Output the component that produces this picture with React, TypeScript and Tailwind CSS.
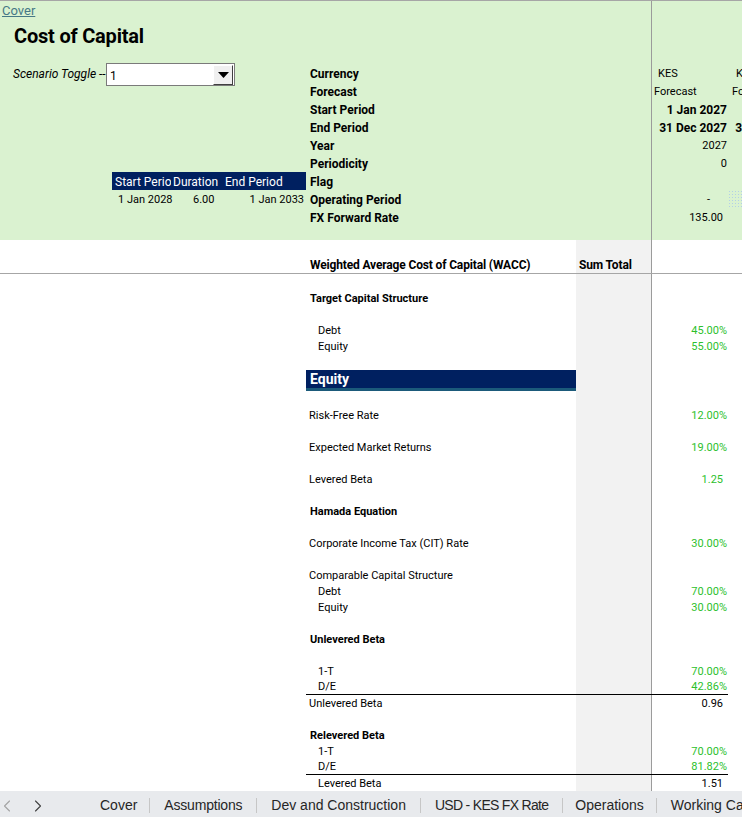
import type { ReactNode } from 'react';
import { ChevronLeft, ChevronRight } from 'lucide-react';

// spreadsheet columns: A 0-306 · B 306-576 · C 576-651 · D 651-728 · E 728+
function SheetRow({
  h,
  a,
  b,
  c,
  d,
  e,
  gray = false,
  line = false,
  eClass = '',
}: {
  h: string;
  a?: ReactNode;
  b?: ReactNode;
  c?: ReactNode;
  d?: ReactNode;
  e?: ReactNode;
  gray?: boolean;
  line?: boolean;
  eClass?: string;
}) {
  return (
    <div className={`flex ${h}`}>
      <div className="relative flex w-[306px] shrink-0 items-center">{a}</div>
      <div className={`flex ${line ? 'border-b border-black' : ''}`}>
        <div className="flex w-[270px] shrink-0 items-center">{b}</div>
        <div className={`flex w-[75px] shrink-0 items-center ${gray ? 'bg-[#f2f2f2]' : ''}`}>{c}</div>
        <div className="flex w-[77px] shrink-0 items-center border-l border-[#9b9b9b]">{d}</div>
      </div>
      <div className={`flex min-w-0 flex-1 items-center overflow-hidden ${eClass}`}>{e}</div>
    </div>
  );
}

const headRows: { label: string; d?: ReactNode; e?: ReactNode; a?: ReactNode; eClass?: string }[] = [
  {
    label: 'Currency',
    d: <span className="pl-[6px] pt-[2px] text-[11px]">KES</span>,
    e: <span className="whitespace-nowrap pl-[8px] pt-[2px] text-[11px]">KES</span>,
    a: (
      <>
        <span className="whitespace-nowrap pl-[13px] pt-[2px] text-[12px] italic">Scenario Toggle --</span>
        <div className="absolute left-[106px] top-[-1px] flex h-[23px] w-[129px] items-center border border-[#7a7a7a] bg-white">
          <span className="pl-[3px] pt-[2px] text-[12px]">1</span>
          <div className="ml-auto mr-px flex h-[20px] w-[20px] items-center justify-center border border-b-[#404040] border-l-white border-r-[#404040] border-t-white bg-[#f0f0f0]">
            <svg width="11" height="6" viewBox="0 0 11 6">
              <polygon points="0,0 11,0 5.5,6" fill="#000" />
            </svg>
          </div>
        </div>
      </>
    ),
  },
  {
    label: 'Forecast',
    d: <span className="pl-[2px] pt-[2px] text-[11px]">Forecast</span>,
    e: <span className="whitespace-nowrap pl-[4px] pt-[2px] text-[11px]">Forecast</span>,
  },
  {
    label: 'Start Period',
    d: <span className="w-full pr-px pt-[2px] text-right text-[12px] font-bold">1 Jan 2027</span>,
  },
  {
    label: 'End Period',
    d: <span className="w-full whitespace-nowrap pr-px pt-[2px] text-right text-[12px] font-bold">31 Dec 2027</span>,
    e: (
      <span className="w-[76px] shrink-0 whitespace-nowrap pr-px pt-[2px] text-right text-[12px] font-bold">
        31 Dec 2028
      </span>
    ),
  },
  { label: 'Year', d: <span className="w-full pr-px pt-[2px] text-right text-[11px]">2027</span> },
  { label: 'Periodicity', d: <span className="w-full pr-px pt-[2px] text-right text-[11px]">0</span> },
  {
    label: 'Flag',
    a: (
      <div className="ml-[112px] flex h-[18px] w-[194px] items-center bg-[#002060] pt-[1px] text-[12px] text-white">
        <span className="w-[59px] shrink-0 overflow-hidden whitespace-nowrap pl-[3px]">Start Period</span>
        <span className="w-[52px] shrink-0 whitespace-nowrap pl-[2px]">Duration</span>
        <span className="whitespace-nowrap pl-[2px]">End Period</span>
      </div>
    ),
  },
  {
    label: 'Operating Period',
    d: <span className="w-full pr-[18px] pt-[2px] text-right text-[11px]">-</span>,
    eClass: 'bg-[radial-gradient(#b3d0e6_0.8px,transparent_1px)] bg-[length:3px_3px]',
    a: (
      <div className="ml-[112px] flex w-[194px] shrink-0 whitespace-nowrap pt-[2px] text-[11px]">
        <span className="w-[59px] shrink-0 pl-[6px]">1 Jan 2028</span>
        <span className="w-[51px] shrink-0 pl-[22px]">6.00</span>
        <span className="flex-1 pr-[2px] text-right">1 Jan 2033</span>
      </div>
    ),
  },
  { label: 'FX Forward Rate', d: <span className="w-full pr-[5px] pt-[2px] text-right text-[11px]">135.00</span> },
];

type Line = {
  label?: string;
  kind?: 'bold' | 'indent' | 'plain';
  value?: string;
  dark?: boolean;
  num?: boolean;
  line?: boolean;
  header?: boolean;
};

const body: Line[] = [
  {},
  { label: 'Target Capital Structure', kind: 'bold' },
  {},
  { label: 'Debt', kind: 'indent', value: '45.00%' },
  { label: 'Equity', kind: 'indent', value: '55.00%' },
  {},
  { header: true },
  {},
  { label: 'Risk-Free Rate', value: '12.00%' },
  {},
  { label: 'Expected Market Returns', value: '19.00%' },
  {},
  { label: 'Levered Beta', value: '1.25', num: true },
  {},
  { label: 'Hamada Equation', kind: 'bold' },
  {},
  { label: 'Corporate Income Tax (CIT) Rate', value: '30.00%' },
  {},
  { label: 'Comparable Capital Structure' },
  { label: 'Debt', kind: 'indent', value: '70.00%' },
  { label: 'Equity', kind: 'indent', value: '30.00%' },
  {},
  { label: 'Unlevered Beta', kind: 'bold' },
  {},
  { label: '1-T', kind: 'indent', value: '70.00%' },
  { label: 'D/E', kind: 'indent', value: '42.86%', line: true },
  { label: 'Unlevered Beta', value: '0.96', num: true, dark: true },
  {},
  { label: 'Relevered Beta', kind: 'bold' },
  { label: '1-T', kind: 'indent', value: '70.00%' },
  { label: 'D/E', kind: 'indent', value: '81.82%', line: true },
  { label: 'Levered Beta', kind: 'indent', value: '1.51', num: true, dark: true },
];

const tabs = [
  { t: 'Cover', cls: 'pl-[14px] pr-[12px]' },
  { t: 'Assumptions', cls: 'px-[14px] tracking-[-0.2px]' },
  { t: 'Dev and Construction', cls: 'px-[14px]' },
  { t: 'USD - KES FX Rate', cls: 'px-[14px] tracking-[-0.7px]' },
  { t: 'Operations', cls: 'px-[12px]' },
  { t: 'Working Capital', cls: 'px-[14px]' },
];

export default function App() {
  return (
    <div className="flex h-[817px] w-[742px] flex-col overflow-hidden bg-white font-['Roboto','Liberation_Sans',sans-serif] text-black">
      {/* green header block */}
      <div className="h-[240px] shrink-0 border-t border-[#a6a6a6] bg-[#daf2d0]">
        <SheetRow
          h="h-[18px]"
          a={<span className="pl-[2px] pt-[1px] text-[13px] text-[#467886] underline">Cover</span>}
        />
        <SheetRow
          h="h-[45px]"
          a={
            <span className="self-start whitespace-nowrap pl-[14px] pt-[5px] text-[20px] font-bold leading-6 tracking-[-0.2px]">
              Cost of Capital
            </span>
          }
        />
        {headRows.map((r) => (
          <SheetRow
            key={r.label}
            h="h-[18px]"
            a={r.a}
            b={<span className="pl-[4px] pt-[2px] text-[12px] font-bold">{r.label}</span>}
            d={r.d}
            e={r.e}
            eClass={r.eClass}
          />
        ))}
        <SheetRow h="h-[14px]" />
      </div>

      {/* WACC header */}
      <div className="flex h-[34px] shrink-0 items-stretch border-b border-[#a6a6a6]">
        <div className="w-[306px] shrink-0" />
        <div className="flex w-[270px] shrink-0 items-end pl-[4px] text-[12px] font-bold leading-4 tracking-[-0.15px]">
          Weighted Average Cost of Capital (WACC)
        </div>
        <div className="flex w-[75px] shrink-0 items-end bg-[#f2f2f2] pl-[3px] text-[12px] font-bold leading-4 tracking-[-0.15px]">
          Sum Total
        </div>
        <div className="w-[77px] shrink-0 border-l border-[#9b9b9b]" />
      </div>

      {/* body rows */}
      <div className="flex-1">
        {body.map((r, i) =>
          r.header ? (
            <SheetRow
              key={i}
              h="h-[21px]"
              gray
              b={
                <div className="flex h-full w-full items-center border-b-[3px] border-[#1b5a7a] bg-[#002060] pl-[4px] pt-[1px] text-[14px] font-bold text-white">
                  Equity
                </div>
              }
            />
          ) : (
            <SheetRow
              key={i}
              h="h-4"
              gray
              line={r.line}
              b={
                r.label && (
                  <span
                    className={`pt-[2px] text-[11px] ${r.kind === 'bold' ? 'pl-[4px] font-bold' : r.kind === 'indent' ? 'pl-[12px]' : 'pl-[3px]'}`}
                  >
                    {r.label}
                  </span>
                )
              }
              d={
                r.value && (
                  <span
                    className={`w-full pt-[2px] text-right text-[11px] ${r.num ? 'pr-[5px]' : 'pr-px'} ${r.dark ? 'text-black' : 'text-[#2dbf2d]'}`}
                  >
                    {r.value}
                  </span>
                )
              }
            />
          ),
        )}
      </div>

      {/* sheet tabs */}
      <div className="flex h-[26px] shrink-0 items-center bg-[#e8eaed] pt-[3px] font-['Liberation_Sans',sans-serif] text-[14px] text-[#262626]">
        <div className="flex w-[86px] shrink-0 items-center">
          <ChevronLeft size={20} strokeWidth={1.3} className="ml-[-3px] text-[#a3a3a3]" />
          <ChevronRight size={20} strokeWidth={1.3} className="ml-[11px] text-[#404040]" />
        </div>
        {tabs.map((tab, i) => (
          <div key={tab.t} className="flex shrink-0 items-center">
            {i > 0 && <span className="h-[15px] w-px bg-[#c6c6c6]" />}
            <span className={`whitespace-nowrap ${tab.cls}`}>{tab.t}</span>
          </div>
        ))}
      </div>
    </div>
  );
}
